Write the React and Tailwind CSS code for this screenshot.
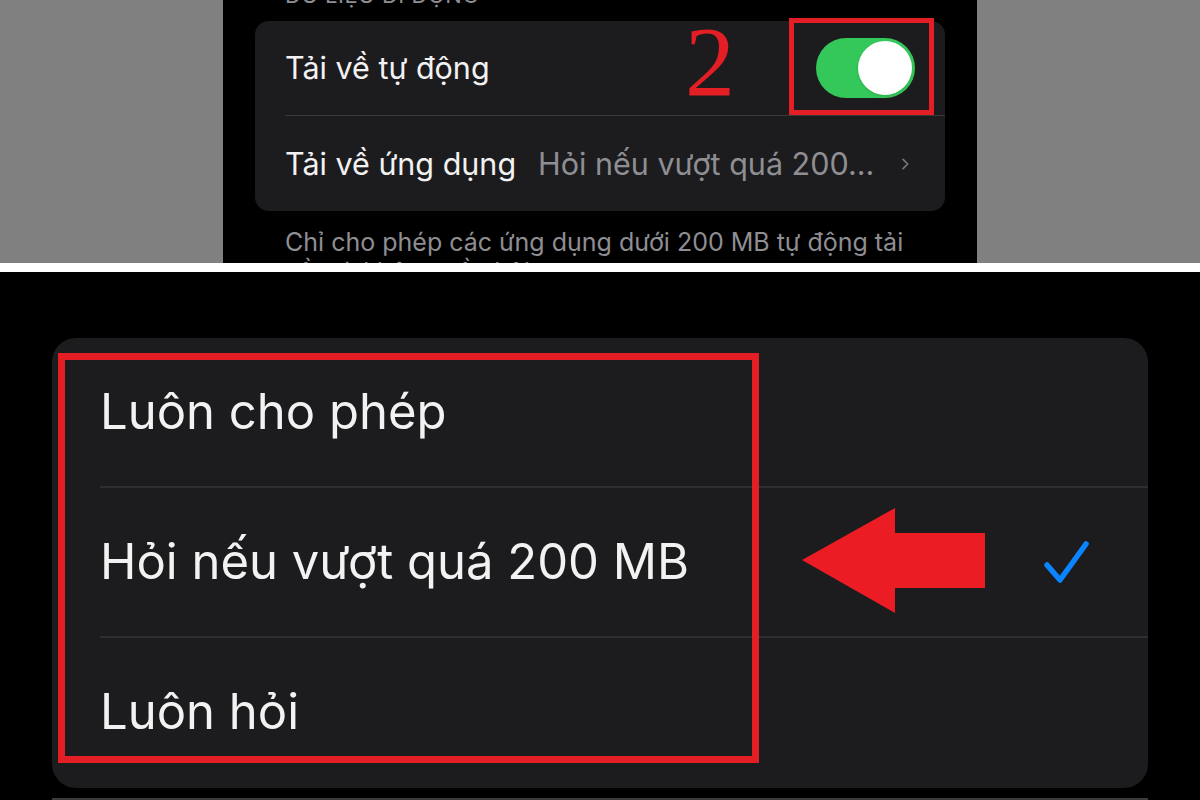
import { ChevronRight } from "lucide-react";

const font = "font-['Inter','Noto_Sans',sans-serif]";

const options = [
  { label: "Luôn cho phép", checked: false },
  { label: "Hỏi nếu vượt quá 200 MB", checked: true },
  { label: "Luôn hỏi", checked: false },
];

const Toggle = () => (
  <div className="w-[99px] h-[60px] rounded-full bg-[#34c759] flex items-center justify-end p-[3px]">
    <div className="w-[54px] h-[54px] rounded-full bg-white shadow" />
  </div>
);

const Check = () => (
  <svg width="48" height="48" viewBox="0 0 48 48" fill="none">
    <path
      d="M5 27 L18 42 L44 6"
      stroke="#0a84ff"
      strokeWidth="5.5"
      strokeLinecap="round"
      strokeLinejoin="round"
    />
  </svg>
);

const Arrow = () => (
  <svg width="186" height="106" viewBox="0 0 186 106">
    <path d="M0 52 L93 0 L93 25 L183 25 L183 80 L93 80 L93 105 Z" fill="#ec1c24" />
  </svg>
);

export default function App() {
  return (
    <div className={`w-[1200px] h-[800px] flex flex-col bg-black overflow-hidden ${font}`}>
      {/* top screenshot */}
      <div className="h-[263px] bg-[#808080] flex justify-center">
        <div className="w-[754px] bg-black px-[32px] overflow-hidden relative">
          <p className="text-[22px] leading-[22px] -mt-[16px] ml-[30px] text-[#8e8e93] tracking-wide">
            DỮ LIỆU DI ĐỘNG
          </p>
          <div className="mt-[15px] rounded-[14px] bg-[#1c1c1e]">
            <div className="h-[94px] flex items-center justify-between pl-[30px] pr-[30px]">
              <span className="text-[30.5px] text-[#f2f2f2]">Tải về tự động</span>
              <Toggle />
            </div>
            <div className="ml-[30px] h-px bg-[#38383a]" />
            <div className="h-[95px] flex items-center pl-[30px] pr-[30px] gap-[22px]">
              <span className="text-[30.5px] text-[#f2f2f2] whitespace-nowrap">Tải về ứng dụng</span>
              <span className="text-[30.5px] text-[#8e8e93] whitespace-nowrap">Hỏi nếu vượt quá 200...</span>
              <ChevronRight className="ml-auto text-[#76767b]" size={26} strokeWidth={2.2} />
            </div>
          </div>
          <p className="mt-[16px] pl-[30px] pr-[20px] text-[25px] leading-[30px] text-[#8e8e93]">
            Chỉ cho phép các ứng dụng dưới 200 MB tự động tải về mà không cần hỏi
          </p>

          {/* annotations */}
          <div className="absolute left-[566px] top-[18px] w-[145px] h-[97px] border-[5px] border-[#e31e24]" />
          <span className="absolute left-[462px] top-[12px] font-['Liberation_Serif',serif] text-[100px] leading-[100px] text-[#e31e24]">
            2
          </span>
        </div>
      </div>

      <div className="h-[9px] bg-white" />

      {/* bottom screenshot */}
      <div className="flex-1 bg-black px-[52px] pt-[66px] flex flex-col">
        <div className="relative h-[450px] rounded-[24px] bg-[#1c1c1e]">
          {options.map((o, i) => (
            <div key={o.label}>
              {i > 0 && <div className="ml-[48px] h-[2px] bg-[#2f2f31]" />}
              <div className="h-[148px] flex items-center pl-[48px] pr-[58px]">
                <span className="text-[49px] text-[#f2f2f2] whitespace-nowrap">{o.label}</span>
                {o.checked && (
                  <span className="ml-auto">
                    <Check />
                  </span>
                )}
              </div>
            </div>
          ))}

          {/* annotations */}
          <div className="absolute left-[6px] top-[15px] w-[701px] h-[410px] border-[7px] border-[#e31e24]" />
          <div className="absolute left-[750px] top-[170px]">
            <Arrow />
          </div>
        </div>
        <div className="flex-1" />
        <div className="h-[2px] bg-[#3a3a3a]" />
      </div>
    </div>
  );
}
